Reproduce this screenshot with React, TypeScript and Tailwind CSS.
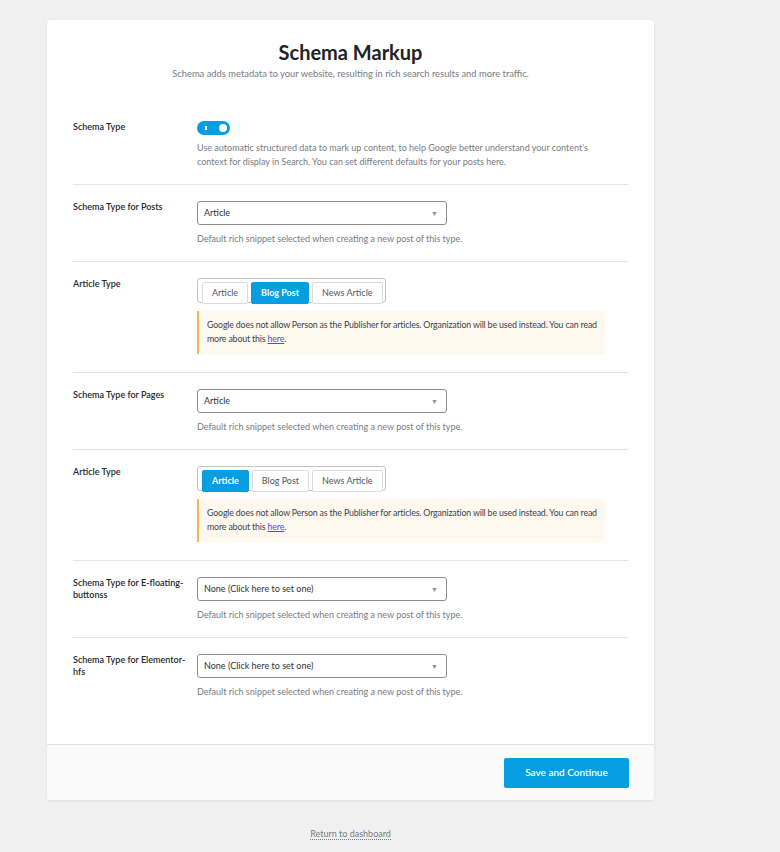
import React from "react";

const font = { fontFamily: "Lato, 'Liberation Sans', sans-serif" };

function Toggle() {
  return (
    <div className="relative w-[33px] h-[14px] rounded-full bg-[#069de3]">
      <span className="absolute left-[8px] top-[5px] w-[1.5px] h-[4px] bg-white" />
      <span className="absolute right-[3px] top-[3px] w-[8px] h-[8px] rounded-full bg-white" />
    </div>
  );
}

function Select({ value }: { value: string }) {
  return (
    <div className="w-[250px] h-[24px] border border-[#8c8f94] rounded-[3px] flex items-center justify-between pl-[6px] pr-[8px] bg-white">
      <span className="text-[9px] text-[#2c3338]">{value}</span>
      <span className="text-[7px] text-[#8c8f94] leading-none">▼</span>
    </div>
  );
}

function Desc({ children }: { children: React.ReactNode }) {
  return <p className="text-[9px] leading-[14px] text-[#787c82]">{children}</p>;
}

function ArticleGroup({ active }: { active: string }) {
  const items = ["Article", "Blog Post", "News Article"];
  return (
    <div className="inline-flex items-end gap-[3px] h-[25px] border border-[#c3c4c7] rounded-[3px] pl-[4px] pr-[2px] pt-[3px]">
      {items.map((it) =>
        it === active ? (
          <button
            key={it}
            className="h-[22px] px-[9px] mb-[-2px] rounded-[2px] bg-[#069de3] text-white text-[9px] font-bold border border-[#069de3]"
          >
            {it}
          </button>
        ) : (
          <button
            key={it}
            className="h-[22px] px-[9px] mb-[-2px] rounded-[2px] bg-white text-[#50575e] text-[9px] border border-[#dcdcde]"
          >
            {it}
          </button>
        )
      )}
    </div>
  );
}

function Notice() {
  return (
    <div className="mt-[8px] w-[408px] bg-[#fef8ee] border-l-2 border-[#f0b849] rounded-r-[2px] pl-[8px] pr-[4px] pt-[7px] pb-[8px] text-[8.8px] tracking-[-0.15px] leading-[14px] text-[#3c434a] whitespace-nowrap">
      Google does not allow Person as the Publisher for articles. Organization will be used instead. You can read
      <br />
      more about this{" "}
      <a href="#" className="text-[#4f4fe6] underline">
        here
      </a>
      .
    </div>
  );
}

function Row({
  label,
  children,
  last,
  first,
}: {
  label: string;
  children: React.ReactNode;
  last?: boolean;
  first?: boolean;
}) {
  return (
    <div
      className={
        "flex " +
        (first ? "pt-[17px] " : "pt-[16px] ") +
        (last ? "pb-[15px]" : "pb-[15px] border-b border-[#e2e4e7]")
      }
    >
      <div className="w-[124px] shrink-0 pr-[10px] text-[9px] leading-[12px] font-semibold text-[#23282d]">
        {label}
      </div>
      <div className="flex-1">{children}</div>
    </div>
  );
}

export default function App() {
  return (
    <div className="min-h-screen bg-[#f0f0f1] pt-[20px] pb-[10px]" style={font}>
      <div className="ml-[47px] w-[607px]">
        <div className="bg-white rounded-[4px] shadow-[0_1px_3px_rgba(0,0,0,0.08)]">
          <div className="px-[26px] pt-[20px] pb-[30px]">
            <h1 className="text-center text-[20px] leading-[24px] font-bold text-[#1d2327]">Schema Markup</h1>
            <p className="mt-[3px] text-center text-[9.4px] leading-[14px] text-[#787c82]">
              Schema adds metadata to your website, resulting in rich search results and more traffic.
            </p>

            <div className="mt-[23px]">
              <Row label="Schema Type" first>
                <Toggle />
                <div className="mt-[6px]">
                  <Desc>
                    Use automatic structured data to mark up content, to help Google better understand your content's
                    <br />
                    context for display in Search. You can set different defaults for your posts here.
                  </Desc>
                </div>
              </Row>

              <Row label="Schema Type for Posts">
                <Select value="Article" />
                <div className="mt-[7px]">
                  <Desc>Default rich snippet selected when creating a new post of this type.</Desc>
                </div>
              </Row>

              <Row label="Article Type">
                <div className="pb-[3px]">
                  <ArticleGroup active="Blog Post" />
                  <Notice />
                </div>
              </Row>

              <Row label="Schema Type for Pages">
                <Select value="Article" />
                <div className="mt-[7px]">
                  <Desc>Default rich snippet selected when creating a new post of this type.</Desc>
                </div>
              </Row>

              <Row label="Article Type">
                <div className="pb-[3px]">
                  <ArticleGroup active="Article" />
                  <Notice />
                </div>
              </Row>

              <Row label="Schema Type for E-floating-buttonss">
                <Select value="None (Click here to set one)" />
                <div className="mt-[7px]">
                  <Desc>Default rich snippet selected when creating a new post of this type.</Desc>
                </div>
              </Row>

              <Row label="Schema Type for Elementor-hfs" last>
                <Select value="None (Click here to set one)" />
                <div className="mt-[7px]">
                  <Desc>Default rich snippet selected when creating a new post of this type.</Desc>
                </div>
              </Row>
            </div>
          </div>

          <div className="h-[56px] border-t border-[#dde3e9] bg-[#fafafa] rounded-b-[4px] flex items-center justify-end pr-[25px]">
            <button className="w-[125px] h-[30px] rounded-[2px] bg-[#069de3] text-white text-[10px] font-semibold">
              Save and Continue
            </button>
          </div>
        </div>

        <div className="mt-[19px] text-center">
          <a
            href="#"
            className="text-[9px] leading-[14px] text-[#787c82] border-b border-dotted border-[#787c82]"
          >
            Return to dashboard
          </a>
        </div>
      </div>
    </div>
  );
}
